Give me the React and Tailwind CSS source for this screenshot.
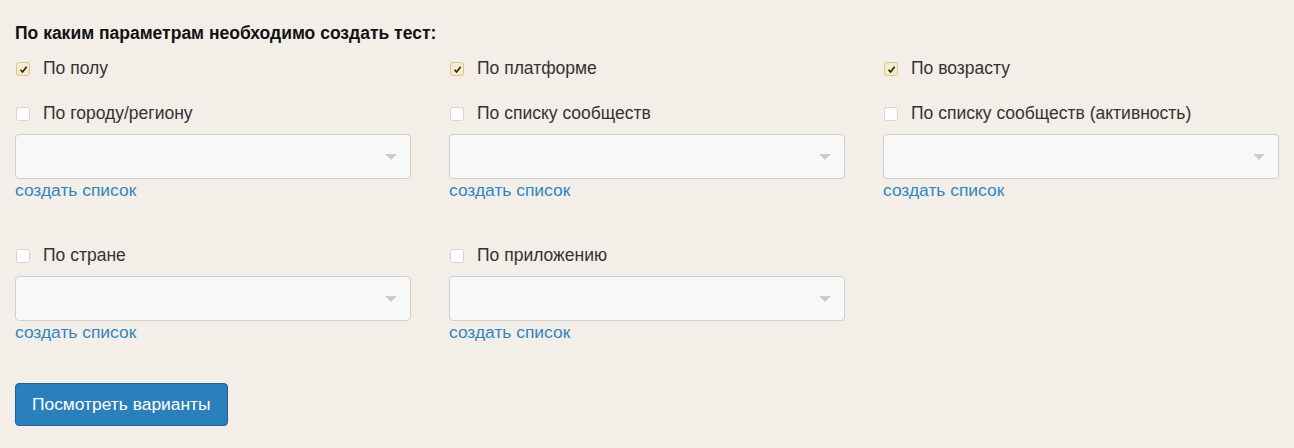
import React from "react";

function Check({ checked }) {
    return (
        <span
            className={
                "flex h-[14px] w-[14px] shrink-0 items-center justify-center rounded-[3px] border " +
                (checked ? "border-[#d9c78f] bg-[#f7ecc8]" : "border-[#d4d4d4] bg-white")
            }
        >
            {checked && (
                <svg width="9" height="9" viewBox="0 0 9 9">
                    <path d="M1.5 4.8 L3.6 7 L7.6 1.8" fill="none" stroke="#222" strokeWidth="1.6" />
                </svg>
            )}
        </span>
    );
}

function Option({ label, checked }) {
    return (
        <label className="flex h-6 items-center gap-[13px] pl-[1px] text-[17.5px] text-[#333]">
            <Check checked={checked} />
            <span className="-mt-[1px]">{label}</span>
        </label>
    );
}

function Field({ label }) {
    return (
        <div className="flex flex-col">
            <Option label={label} />
            <div className="mt-2 flex h-[45px] w-[396px] items-center justify-end rounded-[4px] border border-[#cfcfcf] bg-[#f8f8f8] pr-[13px]">
                <svg width="12" height="6" viewBox="0 0 12 6">
                    <path d="M0 0 H12 L6 6 Z" fill="#cccccc" />
                </svg>
            </div>
            <a href="#" className="mt-px h-5 text-[17.4px] leading-5 text-[#2e86c1]">
                создать список
            </a>
        </div>
    );
}

export default function App() {
    return (
        <div className="min-h-[448px] bg-[#f3eee8] pl-[15px] pt-[23px] font-['Liberation_Sans',Arial,sans-serif]">
            {/* Heading */}
            <h3 className="text-[17.5px] font-bold leading-5 text-[#111]">
                По каким параметрам необходимо создать тест:
            </h3>

            {/* Simple toggles */}
            <div className="mt-[14px] grid grid-cols-[396px_396px_396px] gap-x-[38px]">
                <Option label="По полу" checked />
                <Option label="По платформе" checked />
                <Option label="По возрасту" checked />
            </div>

            {/* List filters */}
            <div className="mt-[21px] grid grid-cols-[396px_396px_396px] gap-x-[38px] gap-y-[44px]">
                <Field label="По городу/региону" />
                <Field label="По списку сообществ" />
                <Field label="По списку сообществ (активность)" />
                <Field label="По стране" />
                <Field label="По приложению" />
            </div>

            <button className="mt-[41px] h-[43px] rounded-[4px] border border-[#1f6192] bg-[#2b7fba] px-4 text-[17.4px] text-white">
                Посмотреть варианты
            </button>
        </div>
    );
}
